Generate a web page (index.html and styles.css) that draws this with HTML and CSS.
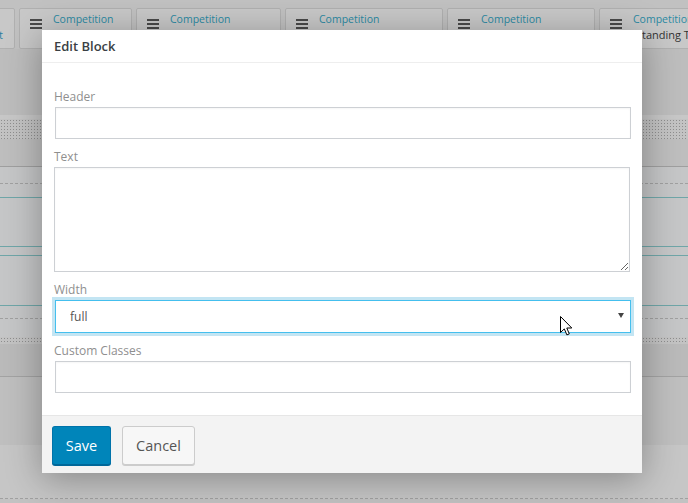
FILE: index.html
```html
<!DOCTYPE html>
<html>
<head>
<meta charset="utf-8">
<link rel="stylesheet" href="styles.css">
</head>
<body>
<div class="page">
  <div class="tabs">
    <div class="tab t1"><div class="tab-txt right"><div class="tab-l1">&nbsp;</div><div class="tab-l2 teal">t</div></div></div>
    <div class="tab t2"><span class="burger"><i></i><i></i><i></i></span><div class="tab-txt"><div class="tab-l1">Competition</div></div></div>
    <div class="tab t3"><span class="burger"><i></i><i></i><i></i></span><div class="tab-txt"><div class="tab-l1">Competition</div></div></div>
    <div class="tab t4"><span class="burger"><i></i><i></i><i></i></span><div class="tab-txt"><div class="tab-l1">Competition</div></div></div>
    <div class="tab t5"><span class="burger"><i></i><i></i><i></i></span><div class="tab-txt"><div class="tab-l1">Competition</div></div></div>
    <div class="tab t6"><span class="burger"><i></i><i></i><i></i></span><div class="tab-txt"><div class="tab-l1">Competition</div><div class="tab-l2 l2-6">tanding T</div></div></div>
  </div>
  <div class="band b1"></div>
  <div class="band b2"></div>
  <div class="band dots d1"></div>
  <div class="band b3"></div>
  <div class="band b4"></div>
  <div class="band b5"></div>
  <div class="band b6"></div>
  <div class="band b7"></div>
  <div class="band b8"></div>
  <div class="band b9"></div>
  <div class="band b10"></div>
  <div class="band dots d2"></div>
  <div class="band b11"></div>
  <div class="band b12"></div>
  <div class="band b13"></div>
</div>

<div class="modal">
  <div class="modal-head">Edit Block</div>
  <div class="modal-body">
    <div class="field">
      <label class="lbl">Header</label>
      <input class="ctl" type="text">
    </div>
    <div class="field">
      <label class="lbl">Text</label>
      <textarea class="ctl ta"></textarea>
    </div>
    <div class="field">
      <label class="lbl">Width</label>
      <div class="sel-wrap">
        <select class="ctl sel"><option>full</option></select>
        <span class="caret"></span>
      </div>
    </div>
    <div class="field">
      <label class="lbl">Custom Classes</label>
      <input class="ctl" type="text">
    </div>
  </div>
  <div class="modal-foot">
    <button class="btn primary">Save</button>
    <button class="btn secondary">Cancel</button>
  </div>
</div>

<svg class="cursor" width="13" height="20" viewBox="0 0 13 20">
  <path d="M0.5 0.5 V16.5 L4.3 12.9 L6.9 18.9 L9.3 17.9 L6.8 12 H11.8 Z" fill="#ffffff" stroke="#000000" stroke-width="1" stroke-linejoin="miter"/>
</svg>
</body>
</html>
```

FILE: styles.css
```css
html, body {
  margin: 0;
  padding: 0;
}
body {
  width: 688px;
  height: 503px;
  overflow: hidden;
  position: relative;
  background: #c2c2c2;
  font-family: "Open Sans", "Noto Sans", sans-serif;
}

/* background page */
.page {
  width: 688px;
}
.tabs {
  display: flex;
  gap: 4px;
  padding-top: 8px;
  height: 49px;
  box-sizing: border-box;
  overflow: hidden;
  background: #c1c1c1;
}
.tab {
  flex: none;
  height: 41px;
  box-sizing: border-box;
  border: 1px solid #b0b0b0;
  border-radius: 2px;
  background: #c8c8c8;
  display: flex;
  align-items: flex-start;
  padding: 3px 0 0 10px;
  overflow: hidden;
}
.t1 { width: 60px; margin-left: -45px; padding: 3px 11px 0 0; justify-content: flex-end; }
.t2 { width: 113px; }
.t3 { width: 145px; }
.t4 { width: 158px; }
.t5 { width: 148px; }
.t6 { width: 120px; }
.burger {
  display: flex;
  flex-direction: column;
  gap: 2px;
  width: 12px;
  margin: 7px 11px 0 0;
  flex: none;
}
.burger i {
  display: block;
  height: 2px;
  background: #4a4a4a;
}
.tab-txt {
  white-space: nowrap;
}
.tab-txt.right { text-align: right; }
.tab-l1 {
  font-size: 10.5px;
  line-height: 14px;
  color: #2b8aa3;
}
.tab-l2 {
  font-size: 11px;
  line-height: 14px;
  margin-top: 2px;
  color: #333333;
}
.tab-l2.teal { color: #2a7ea0; }
.l2-6 { padding-left: 9px; }

.band { width: 688px; }
.b1 { height: 66px; background: #bdbdbd; }
.b2 { height: 4px; background: #c7c7c7; }
.dots {
  background-color: #c3c3c3;
  background-image: radial-gradient(circle, #8e8e8e 0.7px, transparent 1px);
  background-size: 3px 3px;
}
.d1 { height: 20px; }
.b3 { height: 27px; background: #bebebe; border-bottom: 1px solid #9f9f9f; }
.b4 { height: 16px; background: #c5c6c7; border-bottom: 1px dashed #a0a0a0; }
.b5 { height: 13px; background: #c5c6c7; border-bottom: 1px solid #6fa6a8; }
.b6 { height: 48px; background: #c5c6c7; border-bottom: 1px solid #6fa6a8; }
.b7 { height: 8px; background: #c5c6c7; border-bottom: 1px solid #6fa6a8; }
.b8 { height: 49px; background: #c5c6c7; border-bottom: 1px solid #6fa6a8; }
.b9 { height: 12px; background: #c5c6c7; border-bottom: 1px dashed #a0a0a0; }
.b10 { height: 18px; background: #c5c6c7; }
.d2 { height: 7px; }
.b11 { height: 32px; background: #bababa; border-bottom: 1px solid #a3a3a3; }
.b12 { height: 68px; background: #bfbfbf; }
.b13 { height: 53px; background: #c6c6c6; border-bottom: 1px dashed #a0a0a0; }

/* modal */
.modal {
  position: absolute;
  left: 42px;
  top: 30px;
  width: 600px;
  height: 443px;
  background: #ffffff;
  display: flex;
  flex-direction: column;
  box-shadow: 0 6px 34px rgba(0, 0, 0, 0.32);
}
.modal-head {
  height: 32px;
  line-height: 32px;
  padding-left: 12px;
  border-bottom: 1px solid #eeeeee;
  font-size: 13px;
  font-weight: 600;
  color: #3a3f44;
  flex: none;
}
.modal-body {
  flex: 1;
  padding: 26px 11px 0 13px;
  display: flex;
  flex-direction: column;
  gap: 10px;
}
.field {
  display: flex;
  flex-direction: column;
}
.lbl {
  display: block;
  font-size: 12px;
  line-height: 16px;
  color: #8f8f8f;
  margin: 0 0 2px -1px;
}
.ctl {
  display: block;
  box-sizing: border-box;
  width: 576px;
  height: 32px;
  margin: 0;
  border: 1px solid #cdd0d4;
  border-radius: 0;
  background: #ffffff;
  box-shadow: inset 0 1px 2px rgba(0, 0, 0, 0.04);
  font-family: "Open Sans", "Noto Sans", sans-serif;
  font-size: 12px;
  color: #555555;
  outline: none;
}
.ta {
  height: 105px;
  margin-left: -1px;
  resize: vertical;
}
.sel-wrap {
  position: relative;
  width: 576px;
}
.sel {
  height: 33px;
  appearance: none;
  -webkit-appearance: none;
  padding: 0 0 0 14px;
  border-color: #44bfee;
  box-shadow: 0 0 0 3px #c3e5f3;
}
.caret {
  position: absolute;
  right: 7px;
  top: 13px;
  width: 0;
  height: 0;
  border-left: 3px solid transparent;
  border-right: 3px solid transparent;
  border-top: 5px solid #444444;
}
.modal-foot {
  flex: none;
  height: 47px;
  border-top: 1px solid #e6e6e6;
  background: #f3f3f3;
  padding: 10px 0 0 10px;
  display: flex;
  align-items: flex-start;
  gap: 11px;
}
.btn {
  height: 39px;
  box-sizing: border-box;
  border-radius: 3px;
  font-family: "Open Sans", "Noto Sans", sans-serif;
  font-size: 14.5px;
  padding: 0;
  margin: 0;
  cursor: default;
}
.primary {
  width: 59px;
  background: #0085ba;
  border: 1px solid #0073aa;
  border-bottom-color: #006799;
  box-shadow: 0 1px 0 #006799;
  color: #ffffff;
}
.secondary {
  width: 73px;
  background: #f7f7f7;
  border: 1px solid #cccccc;
  box-shadow: 0 1px 0 #cccccc;
  color: #555555;
}

.cursor {
  position: absolute;
  left: 560px;
  top: 316px;
}
```
